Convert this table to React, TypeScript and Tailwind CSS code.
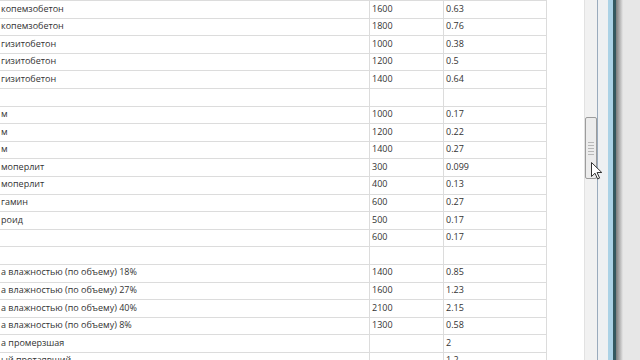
const rows: [string, string, string][] = [
  ["копемзобетон", "1600", "0.63"],
  ["копемзобетон", "1800", "0.76"],
  ["гизитобетон", "1000", "0.38"],
  ["гизитобетон", "1200", "0.5"],
  ["гизитобетон", "1400", "0.64"],
  ["", "", ""],
  ["м", "1000", "0.17"],
  ["м", "1200", "0.22"],
  ["м", "1400", "0.27"],
  ["моперлит", "300", "0.099"],
  ["моперлит", "400", "0.13"],
  ["гамин", "600", "0.27"],
  ["роид", "500", "0.17"],
  ["", "600", "0.17"],
  ["", "", ""],
  ["а влажностью (по объему) 18%", "1400", "0.85"],
  ["а влажностью (по объему) 27%", "1600", "1.23"],
  ["а влажностью (по объему) 40%", "2100", "2.15"],
  ["а влажностью (по объему) 8%", "1300", "0.58"],
  ["а промерзшая", "", "2"],
  ["ый протаявший", "", "1.2"],
];

function Cursor() {
  return (
    <svg
      className="absolute left-[591px] top-[162px]"
      width="12"
      height="18"
      viewBox="0 0 12 18"
    >
      <path
        d="M0.5 0.5 L0.5 14.5 L4 11.2 L6.6 17 L8.6 16.1 L6.1 10.5 L10.8 10.5 Z"
        fill="#fff"
        stroke="#333"
        strokeWidth="1"
        strokeLinejoin="round"
      />
    </svg>
  );
}

export default function App() {
  return (
    <div
      className="relative flex h-[360px] w-[640px] overflow-hidden bg-white text-[9px] text-[#333]"
      style={{ fontFamily: '"Open Sans", "Noto Sans", sans-serif' }}
    >
      <div className="w-[547px] shrink-0 border-t border-[#dcdcdc]">
        {rows.map(([name, density, lambda], i) => (
          <div key={i} className="flex h-[17.6px] border-b border-[#dcdcdc]">
            <div className="flex w-[370px] items-center whitespace-nowrap border-r border-[#dcdcdc] pb-[2px] pl-px">
              {name}
            </div>
            <div className="flex w-[74px] items-center border-r border-[#dcdcdc] pb-[2px] pl-[2px]">
              {density}
            </div>
            <div className="flex w-[103px] items-center border-r border-[#dcdcdc] pb-[2px] pl-[2px]">
              {lambda}
            </div>
          </div>
        ))}
      </div>

      <div className="w-[37px] shrink-0" />

      {/* vertical scrollbar */}
      <div className="w-[13px] shrink-0 border-l border-[#e2e2e2] bg-[#f1f1f1]">
        <div className="mt-[117px] flex h-[62px] w-[12px] flex-col items-center justify-center gap-[2px] rounded-[2px] border border-[#9c9c9c] bg-[#ececec]">
          <div className="h-px w-[6px] bg-[#b8b8b8]" />
          <div className="h-px w-[6px] bg-[#b8b8b8]" />
          <div className="h-px w-[6px] bg-[#b8b8b8]" />
          <div className="h-px w-[6px] bg-[#b8b8b8]" />
          <div className="h-px w-[6px] bg-[#b8b8b8]" />
        </div>
      </div>
      <div className="w-px shrink-0 bg-[#9aabbd]" />
      <div className="w-[10px] shrink-0 bg-[#eef0f2]" />
      <div className="w-[5px] shrink-0 bg-[#abd2e6]" />
      <div className="w-[3px] shrink-0 bg-[#34585f]" />
      <div className="w-[7px] shrink-0 bg-gradient-to-r from-[#7c7c7c] to-[#e6e6e6]" />
      <div className="flex-1 bg-[#e7e7e7]" />

      <Cursor />
    </div>
  );
}
